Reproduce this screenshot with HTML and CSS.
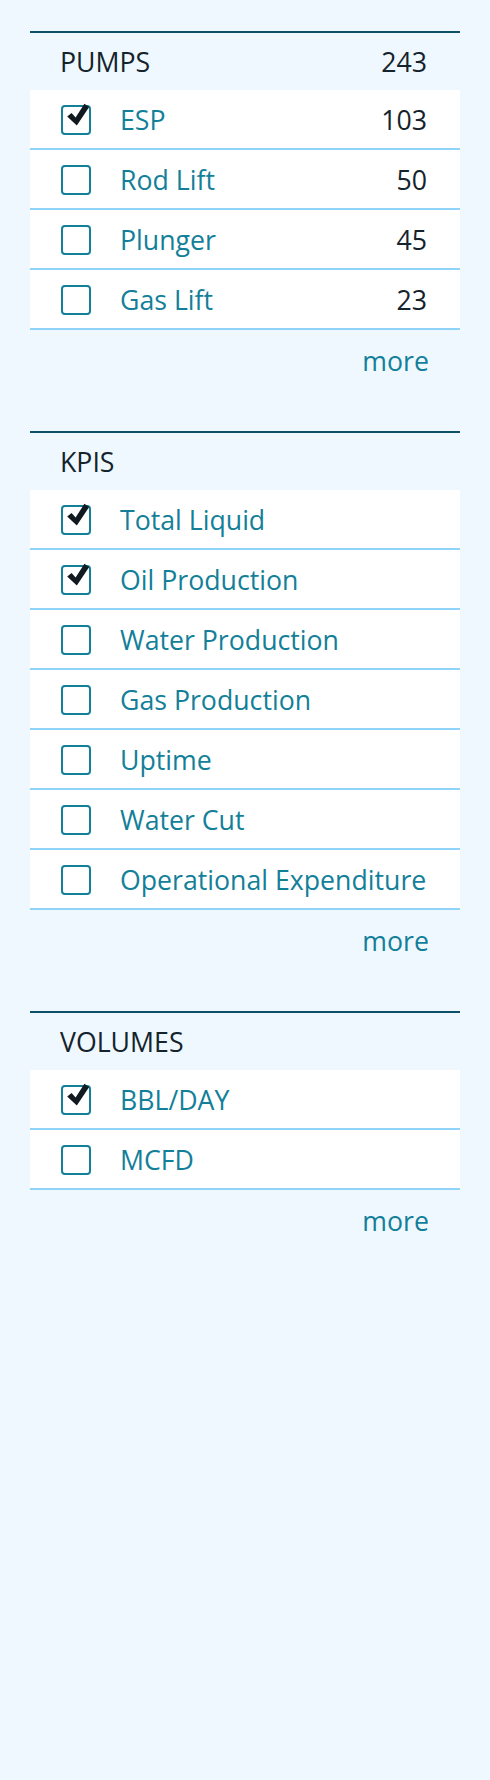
FILE: index.html
```html
<!DOCTYPE html>
<html>
<head>
<meta charset="utf-8">
<link rel="stylesheet" href="styles.css">
</head>
<body>
<div class="panel">
  <section class="group">
    <div class="group-head"><span>PUMPS</span><span class="count">243</span></div>
    <ul class="list">
      <li class="row"><span class="box checked"><svg viewBox="0 0 30 30"><path d="M1.5 17 L7 12.5 L12 18 L23 1 L29 5 L13.5 28 Z"/></svg></span><span class="label">ESP</span><span class="count">103</span></li>
      <li class="row"><span class="box"></span><span class="label">Rod Lift</span><span class="count">50</span></li>
      <li class="row"><span class="box"></span><span class="label">Plunger</span><span class="count">45</span></li>
      <li class="row"><span class="box"></span><span class="label">Gas Lift</span><span class="count">23</span></li>
    </ul>
    <div class="more"><a>more</a></div>
  </section>
  <section class="group">
    <div class="group-head"><span>KPIS</span></div>
    <ul class="list">
      <li class="row"><span class="box checked"><svg viewBox="0 0 30 30"><path d="M1.5 17 L7 12.5 L12 18 L23 1 L29 5 L13.5 28 Z"/></svg></span><span class="label">Total Liquid</span></li>
      <li class="row"><span class="box checked"><svg viewBox="0 0 30 30"><path d="M1.5 17 L7 12.5 L12 18 L23 1 L29 5 L13.5 28 Z"/></svg></span><span class="label">Oil Production</span></li>
      <li class="row"><span class="box"></span><span class="label">Water Production</span></li>
      <li class="row"><span class="box"></span><span class="label">Gas Production</span></li>
      <li class="row"><span class="box"></span><span class="label">Uptime</span></li>
      <li class="row"><span class="box"></span><span class="label">Water Cut</span></li>
      <li class="row"><span class="box"></span><span class="label">Operational Expenditure</span></li>
    </ul>
    <div class="more"><a>more</a></div>
  </section>
  <section class="group">
    <div class="group-head"><span>VOLUMES</span></div>
    <ul class="list">
      <li class="row"><span class="box checked"><svg viewBox="0 0 30 30"><path d="M1.5 17 L7 12.5 L12 18 L23 1 L29 5 L13.5 28 Z"/></svg></span><span class="label">BBL/DAY</span></li>
      <li class="row"><span class="box"></span><span class="label">MCFD</span></li>
    </ul>
    <div class="more"><a>more</a></div>
  </section>
</div>
</body>
</html>
```
FILE: styles.css
```css
html, body {
  margin: 0;
  padding: 0;
  background: #eef8fe;
}
body {
  font-family: "Open Sans", "Noto Sans", sans-serif;
  font-size: 26.7px;
  color: #14232c;
}
.panel {
  padding: 31px 30px 0 30px;
}
.group {
  border-top: 2px solid #0b5068;
  margin-bottom: 41px;
}
.group-head {
  height: 57px;
  display: flex;
  align-items: center;
  justify-content: space-between;
  padding: 0 33px 0 30px;
}
.list {
  list-style: none;
  margin: 0;
  padding: 0;
}
.row {
  height: 58px;
  background: #ffffff;
  border-bottom: 2px solid #8fd4f8;
  display: flex;
  align-items: center;
  padding: 0 33px 0 31px;
  white-space: nowrap;
}
.box {
  width: 30px;
  height: 30px;
  box-sizing: border-box;
  border: 2px solid #137f99;
  border-radius: 4px;
  flex: none;
  position: relative;
  margin-top: 2px;
}
.box svg {
  position: absolute;
  left: 3px;
  top: -4px;
  width: 24px;
  height: 24px;
  fill: #111a20;
}
.label {
  margin-left: 29px;
  color: #137f99;
  flex: 1;
}
.count {
  color: #14232c;
}
.more {
  height: 60px;
  display: flex;
  align-items: center;
  justify-content: flex-end;
  padding-right: 31px;
}
.more a {
  color: #137f99;
}
```
